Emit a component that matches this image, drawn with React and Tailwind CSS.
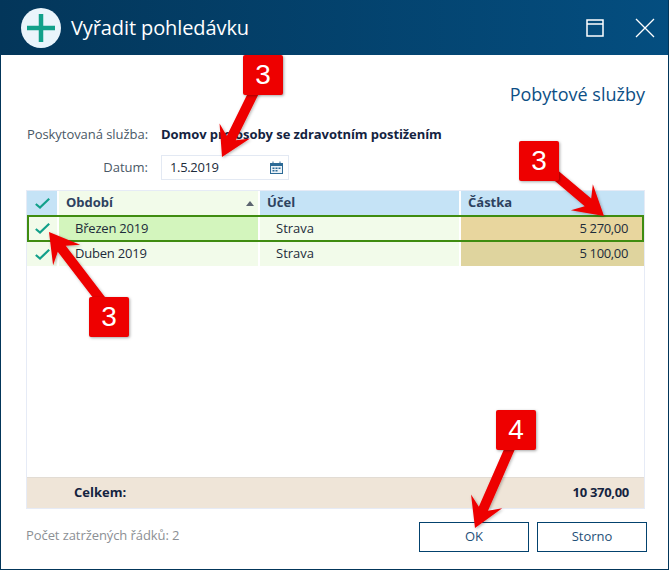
import React from "react";

const rows = [
  { period: "Březen 2019", purpose: "Strava", amount: "5 270,00", selected: true },
  { period: "Duben 2019", purpose: "Strava", amount: "5 100,00", selected: false },
];

const Check = () => (
  <svg width="15" height="11" viewBox="0 0 15 11" fill="none">
    <path d="M0.8 6 L5 9.5 L14.2 0.8" stroke="#12a08a" strokeWidth="2.2" />
  </svg>
);

// red callout arrow from (x1,y1) to the tip (x2,y2)
const arrowPoints = (x1, y1, x2, y2) => {
  const len = Math.hypot(x2 - x1, y2 - y1);
  const ux = (x2 - x1) / len;
  const uy = (y2 - y1) / len;
  const nx = -uy;
  const ny = ux;
  const pt = (along, side) =>
    `${x2 - ux * along + nx * side},${y2 - uy * along + ny * side}`;
  const head = 29;
  return [
    pt(len, 5),
    pt(head - 8, 5),
    pt(head, 17),
    pt(0, 0),
    pt(head, -17),
    pt(head - 8, -5),
    pt(len, -5),
  ].join(" ");
};

const arrows = [
  [255, 90, 222, 157],
  [552, 172, 604, 216],
  [101, 300, 49, 232],
  [510, 448, 475, 528],
];

const Badge = ({ className, children }) => (
  <div
    className={`absolute w-10 h-10 bg-[#ee0000] rounded-[2px] shadow-[1px_1px_3px_rgba(0,0,0,0.35)] flex items-center justify-center text-white text-[28px] font-['Liberation_Sans',sans-serif] ${className}`}
  >
    {children}
  </div>
);

const App = () => {
  return (
    <div className="relative w-[669px] h-[570px] overflow-hidden bg-white border-x border-b border-[#03365a] font-['Open_Sans',sans-serif] text-[13px] text-[#1d2b3a]">
      <div className="h-[55px] -mx-px bg-gradient-to-r from-[#03365a] to-[#044e80] flex items-center pl-[21px] pr-[14px] text-white">
        <div className="w-10 h-10 rounded-full bg-[#eaf4fb] flex items-center justify-center">
          <svg width="28" height="28" viewBox="0 0 28 28">
            <path d="M14 0 V28 M0 14 H28" stroke="#12a08a" strokeWidth="4.5" />
          </svg>
        </div>
        <div className="ml-[10px] text-[20px] tracking-[-0.1px] flex-1">Vyřadit pohledávku</div>
        <svg width="18" height="18" viewBox="0 0 18 18" fill="none" className="mr-[31px]">
          <path d="M1 1 H17 V17 H1 Z M1 5 H17" stroke="#fff" strokeWidth="1.5" />
        </svg>
        <svg width="20" height="20" viewBox="0 0 20 20" fill="none">
          <path d="M1 1 L19 19 M19 1 L1 19" stroke="#fff" strokeWidth="1.3" />
        </svg>
      </div>

      <div className="pl-[25px] pr-[22px]">
        <div className="pt-[26px] text-right text-[18px] leading-[26px] text-[#0d4f85] pr-px">
          Pobytové služby
        </div>
        <div className="mt-[18px] flex items-center h-[20px]">
          <div className="w-[122px] flex justify-end whitespace-nowrap text-[#4a5866] tracking-[-0.05px]">Poskytovaná služba:</div>
          <div className="ml-[13px] font-bold text-[#14233f] tracking-[-0.07px]">Domov pro osoby se zdravotním postižením</div>
        </div>
        <div className="mt-[10px] flex items-center">
          <div className="w-[122px] text-right text-[#4a5866]">Datum:</div>
          <div className="ml-[13px] w-[128px] h-[25px] border border-[#e3e9f3] flex items-center justify-between pl-[8px] pr-[5px] text-[#1d2b3a]">
            <span className="tracking-[-0.35px]">1.5.2019</span>
            <svg width="13" height="13" viewBox="0 0 13 13">
              <path d="M0 2 H2.5 V0.5 H3.5 V2 H9.5 V0.5 H10.5 V2 H13 V13 H0 Z" fill="#2c6a96" />
              <path d="M1 5 H12 V12 H1 Z" fill="#eaf2f8" />
              <path d="M2.5 6.5 H4.5 V8 H2.5 Z M5.5 6.5 H7.5 V8 H5.5 Z M8.5 6.5 H10.5 V8 H8.5 Z M2.5 9 H4.5 V10.5 H2.5 Z M5.5 9 H7.5 V10.5 H5.5 Z" fill="#2c6a96" />
            </svg>
          </div>
        </div>

        <div className="mt-[10px] h-[319px] w-[619px] border border-[#e6ebf6] flex flex-col">
          <div className="flex h-[24px] font-bold text-[#2d4260] shrink-0">
            <div className="w-[32px] bg-[#c5e3f6] border-r-2 border-white flex items-center justify-center">
              <Check />
            </div>
            <div className="w-[201px] bg-[#f2fbea] border-r-2 border-white flex items-center justify-between pl-[7px] pr-[4px]">
              <span>Období</span>
              <span className="w-0 h-0 border-x-[4px] border-x-transparent border-b-[5px] border-b-[#5c6470]"></span>
            </div>
            <div className="w-[201px] bg-[#c5e3f6] border-r-2 border-white flex items-center pl-[7px]">Účel</div>
            <div className="flex-1 bg-[#c5e3f6] flex items-center pl-[7px]">Částka</div>
          </div>
          {rows.map((row) => (
            <div
              key={row.period}
              className={`relative flex shrink-0 ${row.selected ? "h-[27px]" : "h-[24px]"}`}
            >
              <div className="w-[32px] bg-[#f2fbea] border-r-2 border-white flex items-center justify-center">
                <Check />
              </div>
              <div className={`w-[201px] border-r-2 border-white flex items-center pl-[16px] tracking-[-0.2px] ${row.selected ? "bg-[#d3f5bd]" : "bg-[#f2fbea]"}`}>
                {row.period}
              </div>
              <div className="w-[201px] bg-[#f2fbea] border-r-2 border-white flex items-center pl-[16px]">
                {row.purpose}
              </div>
              <div className={`flex-1 flex items-center justify-end pr-[16px] tracking-[-0.35px] ${row.selected ? "bg-[#e8d69e]" : "bg-[#dfd49e]"}`}>
                {row.amount}
              </div>
              {row.selected && (
                <div className="absolute inset-0 border-2 border-[#3f8c10]"></div>
              )}
            </div>
          ))}
          <div className="flex-1"></div>
          <div className="h-[31px] shrink-0 bg-[#efe5d8] border-t border-[#e2dcd4] flex items-center justify-between pl-[47px] pr-[15px] font-bold text-[#14233f]">
            <span>Celkem:</span>
            <span className="tracking-[-0.3px]">10 370,00</span>
          </div>
        </div>

        <div className="mt-[13px] -mr-px flex items-center">
          <div className="flex-1 pb-[2px] text-[#8c8f94] tracking-[-0.08px]">Počet zatržených řádků: 2</div>
          <div className="w-[110px] h-[30px] border border-[#03426e] flex items-center justify-center text-[#1f5079]">OK</div>
          <div className="ml-[8px] w-[110px] h-[30px] border border-[#03426e] flex items-center justify-center text-[#1f5079]">Storno</div>
        </div>
      </div>

      <svg width="669" height="570" className="absolute left-[-1px] top-0 pointer-events-none">
        <defs>
          <filter id="arrowShadow" x="-20%" y="-20%" width="140%" height="140%">
            <feDropShadow dx="1" dy="1" stdDeviation="1.5" floodColor="#000" floodOpacity="0.3" />
          </filter>
        </defs>
        {arrows.map((a, i) => (
          <polygon key={i} points={arrowPoints(...a)} fill="#ee0000" filter="url(#arrowShadow)" />
        ))}
      </svg>

      <Badge className="left-[242px] top-[55px]">3</Badge>
      <Badge className="left-[518px] top-[141px]">3</Badge>
      <Badge className="left-[88px] top-[297px]">3</Badge>
      <Badge className="left-[495px] top-[410px]">4</Badge>
    </div>
  );
};

export default App;
